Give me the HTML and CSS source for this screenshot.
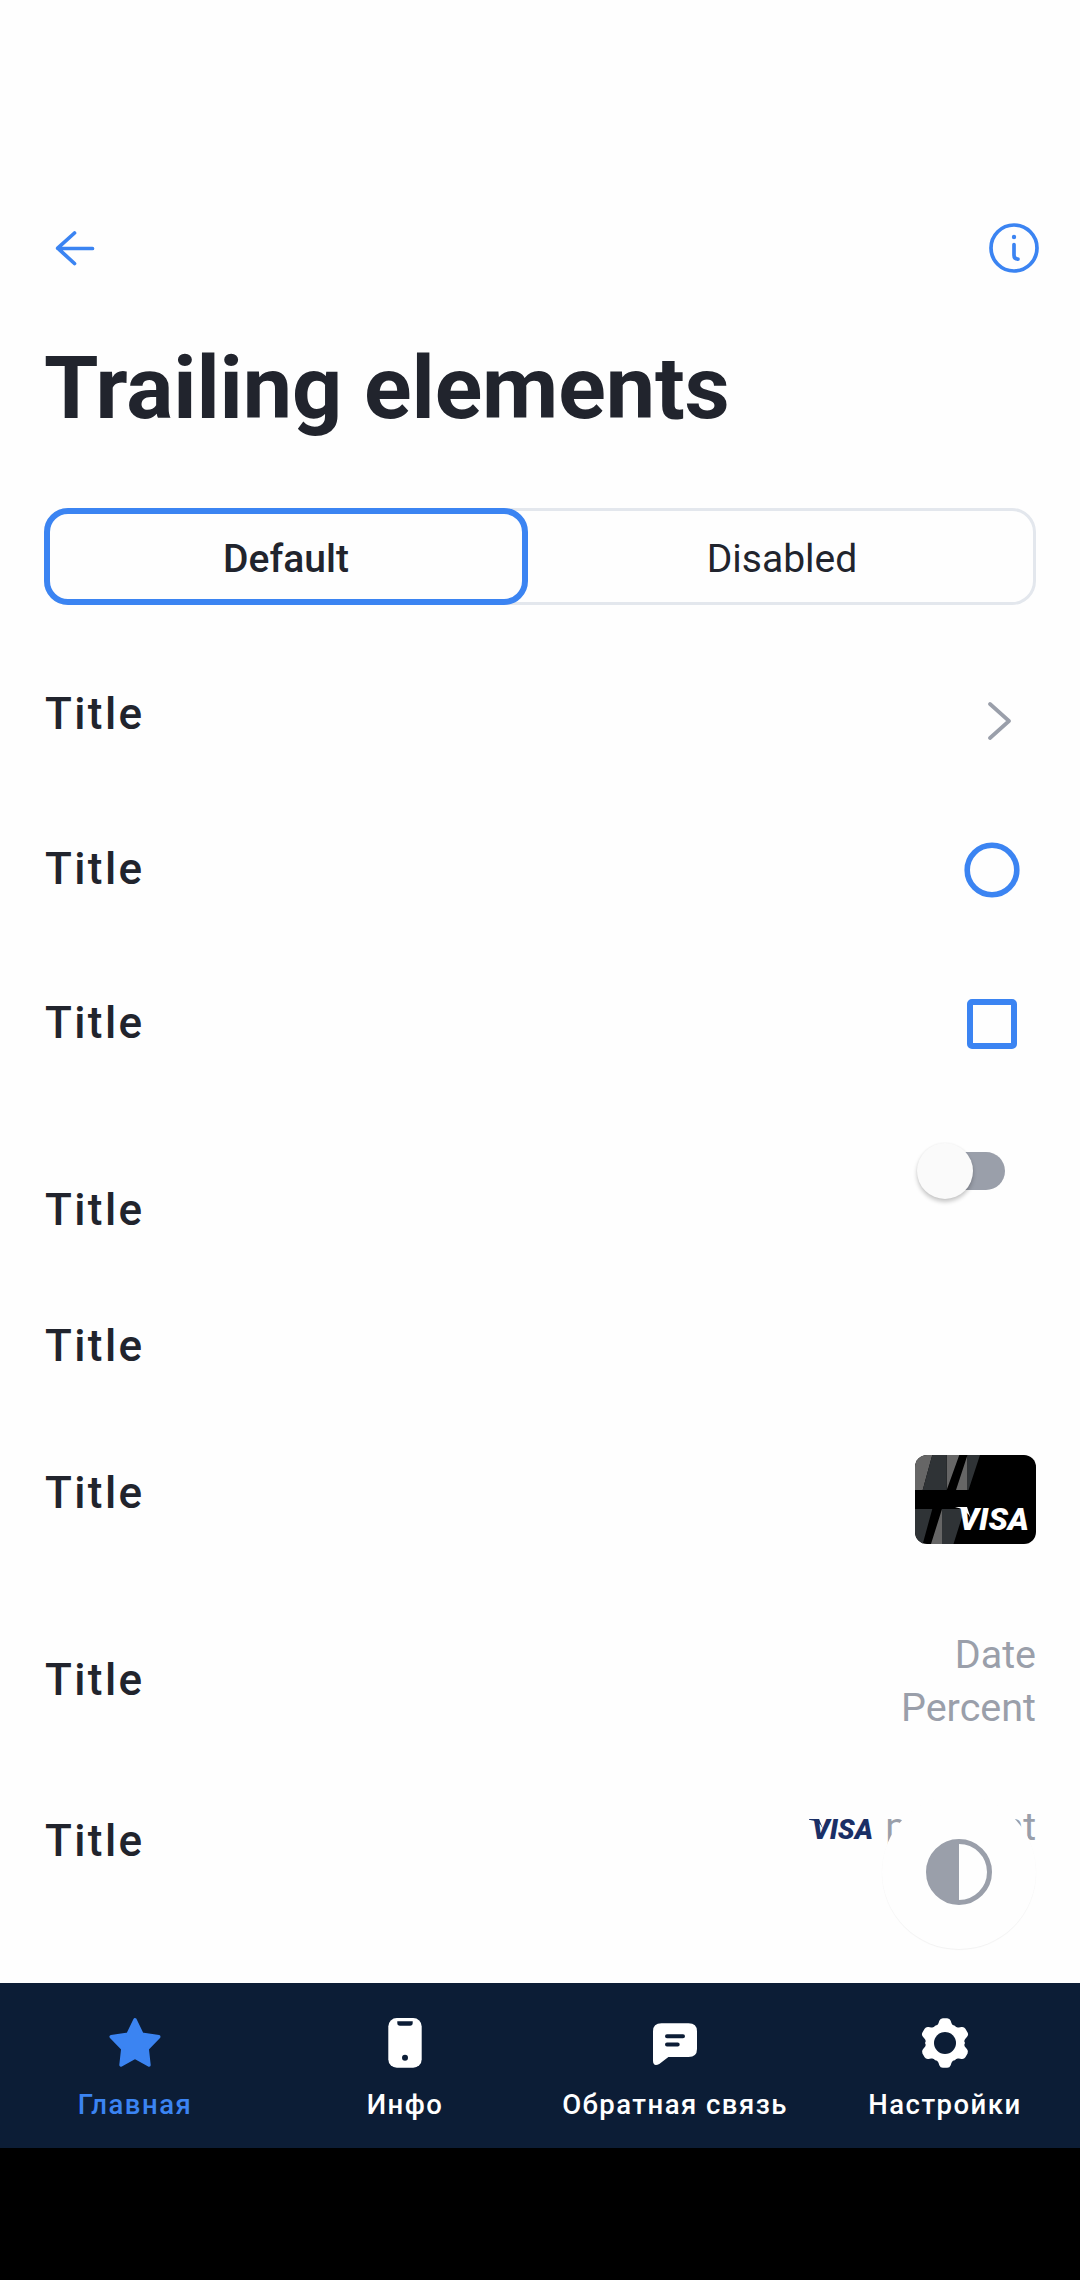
FILE: index.html
```html
<!DOCTYPE html>
<html lang="ru">
<head>
<meta charset="utf-8">
<title>Trailing elements</title>
<link rel="stylesheet" href="styles.css">
</head>
<body>
<div class="screen">
  <header class="toolbar">
    <svg class="icon" width="66" height="66" viewBox="0 0 66 66"><path d="M33.500 18 16.700 33.200 33.500 48.500M17 33.500h34.500" class="line-blue"/></svg>
    <svg class="icon" width="66" height="66" viewBox="0 0 66 66"><circle cx="33" cy="33" r="23" class="line-blue"/><circle cx="33" cy="22" r="2.2" class="fill-blue"/><path d="M33 29.500v10.800q0 3.800 4 3.800" class="line-blue"/></svg>
  </header>
  <h1 class="heading">Trailing elements</h1>
  <div class="segments">
    <div class="segment segment-active">Default</div>
    <div class="segment">Disabled</div>
  </div>
  <main class="list">
    <div class="row row-chevron"><span class="title">Title</span>
      <svg class="chevron" width="24" height="40" viewBox="0 0 24 40"><path d="M3 3 22 20 3 37"/></svg></div>
    <div class="row row-radio"><span class="title">Title</span>
      <svg class="radio" width="56" height="56" viewBox="0 0 56 56"><circle cx="28" cy="28" r="24.800"/></svg></div>
    <div class="row row-check"><span class="title">Title</span><span class="checkbox"></span></div>
    <div class="row row-switch"><span class="title">Title</span><span class="switch"><span class="thumb"></span></span></div>
    <div class="row row-empty"><span class="title">Title</span></div>
    <div class="row row-card"><span class="title">Title</span>
      <svg class="card" width="121" height="89" viewBox="0 0 121 89">
        <rect width="121" height="89" fill="#000"/>
        <path d="M0 0h17.300L7.700 35H0zM31.700 0h12.600L31.700 35zM52.500 0v35H41zM27 54v35H16z" fill="#666"/>
        <path d="M17.300 0h14.400v35h-24zM52.500 0H65L53.500 35h-1zM0 54h17.300L7.700 89H0zM27 54h22.500l-11 35H27z" fill="#2f3336"/>
        <path d="M40 52h12l4 12q-4-10-16-12z" fill="#fff"/>
        <text x="43.500" y="75" textLength="70.500" lengthAdjust="spacingAndGlyphs" class="visa visa-light">VISA</text>
      </svg></div>
    <div class="row row-values"><span class="title">Title</span>
      <div class="values"><span>Date</span><span>Percent</span></div></div>
    <div class="row row-payment"><span class="title">Title</span>
      <div class="payment">
        <svg class="visa-logo" width="64" height="24" viewBox="0 0 64 24"><path d="M0 2h10l4 10Q11 4 0 2.800z" fill="#1a2f66"/><text x="3" y="22" textLength="61" lengthAdjust="spacingAndGlyphs" class="visa visa-dark">VISA</text></svg>
        <span>payment</span>
      </div></div>
    <button class="fab" aria-label="Theme"><svg width="66" height="66" viewBox="0 0 66 66"><circle cx="33" cy="33" r="30.500" fill="none" stroke="#9a9faa" stroke-width="5"/><path d="M33 1a32 32 0 0 0 0 64z" fill="#9a9faa"/></svg></button>
  </main>
  <nav class="tabs">
    <div class="tab tab-active">
      <svg width="66" height="66" viewBox="0 0 66 66"><path d="M33 9.800 40 24.200 56.800 26.800 45.200 38.700 47 55 33 47.300 19 55 20.800 38.700 9.200 26.800 26 24.200z" fill="currentColor" stroke="currentColor" stroke-width="3.400" stroke-linejoin="round"/></svg>
      <span>Главная</span></div>
    <div class="tab">
      <svg width="66" height="66" viewBox="0 0 66 66"><rect x="16.300" y="8" width="33.400" height="49.800" rx="8.500" fill="currentColor"/><path d="M25.300 11.300h15.400v1.700q0 2.700-2.700 2.700H28q-2.700 0-2.700-2.700z" class="cut"/><circle cx="33" cy="47.800" r="3" class="cut"/></svg>
      <span>Инфо</span></div>
    <div class="tab">
      <svg width="66" height="66" viewBox="0 0 66 66"><path d="M19.500 13.300h27q8.500 0 8.500 8V39q0 8-8.500 8H26.400L17.300 54Q11 57 11 50.500V21.300q0-8 8.500-8z" fill="currentColor"/><path d="M25 26.300h16M25 34.500h10.700" class="cut-line"/></svg>
      <span>Обратная связь</span></div>
    <div class="tab">
      <svg width="66" height="66" viewBox="0 0 66 66">
        <defs><path id="tooth" d="M22.500 16.200q3.300-.4 4-3L27.300 10.800q1-2.600 3.500-2.600h4.400q2.500 0 3.500 2.600l.8 2.400q.7 2.600 4 3L33 33z"/></defs>
        <g fill="currentColor"><circle cx="33" cy="33" r="19.300"/><use href="#tooth"/><use href="#tooth" transform="rotate(60 33 33)"/><use href="#tooth" transform="rotate(120 33 33)"/><use href="#tooth" transform="rotate(180 33 33)"/><use href="#tooth" transform="rotate(240 33 33)"/><use href="#tooth" transform="rotate(300 33 33)"/></g>
        <circle cx="33" cy="33" r="11" class="cut"/></svg>
      <span>Настройки</span></div>
  </nav>
</div>
</body>
</html>
```
FILE: styles.css
```css
* { box-sizing: border-box; }
body { margin: 0; background: #000; }
.screen {
  display: flex;
  flex-direction: column;
  width: 1080px;
  height: 2280px;
  padding-bottom: 132px;
  background: linear-gradient(#fefefe, #fefefe) content-box, #000;
  color: #21242d;
  font-family: Roboto, sans-serif;
  overflow: hidden;
}
.toolbar {
  display: flex;
  flex: none;
  justify-content: space-between;
  height: 281px;
  padding: 215px 33px 0 41px;
}
.line-blue { fill: none; stroke: #3b84f2; stroke-width: 3.7; stroke-linecap: round; stroke-linejoin: round; }
.fill-blue { fill: #3b84f2; }
.heading {
  flex: none;
  height: 104px;
  margin: 55px 44px 68px;
  font-size: 88px;
  font-weight: 700;
  line-height: 104px;
  letter-spacing: -0.09px;
}
.segments {
  display: flex;
  flex: none;
  height: 97px;
  margin: 0 44px;
  border-radius: 24px;
  box-shadow: inset 0 0 0 3px #e3e7ed;
}
.segment {
  flex: 1;
  font-size: 39px;
  line-height: 102px;
  text-align: center;
}
.segment-active {
  flex: 0 0 484px;
  border: 6px solid #3b84f2;
  border-radius: 24px;
  font-weight: 500;
  line-height: 90px;
}
.list {
  position: relative;
  flex: none;
  height: 1378px;
  padding: 41px 44px 0 44px;
}
.row {
  display: flex;
  justify-content: space-between;
  align-items: flex-start;
}
.title {
  padding: 42px 0 0 1px;
  font-size: 44px;
  font-weight: 500;
  line-height: 52px;
  letter-spacing: 2.4px;
}
.row-chevron { height: 155px; }
.row-radio { height: 154px; }
.row-check { height: 187px; }
.row-switch { height: 136px; }
.row-empty { height: 147px; }
.row-card { height: 187px; }
.row-values { height: 161px; }
.chevron { margin: 55px 25px 0 0; fill: none; stroke: #9a9faa; stroke-width: 3.7; stroke-linecap: round; stroke-linejoin: round; }
.radio { margin: 41px 16px 0 0; fill: none; stroke: #3b84f2; stroke-width: 5.6; }
.checkbox { width: 50px; height: 50px; margin: 44px 19px 0 0; border: 6px solid #3b84f2; border-radius: 5px; }
.switch { display: flex; align-items: center; width: 80px; height: 38px; margin: 10px 31px 0 0; border-radius: 19px; background: #9a9faa; }
.thumb { flex: none; width: 56px; height: 56px; margin-left: -8px; border-radius: 50%; background: #fafafa; box-shadow: 0 3px 4px rgba(0,0,0,.22), 0 0 2px rgba(0,0,0,.05); }
.card { margin-top: 30px; border-radius: 12px; }
.visa { font-family: Roboto, sans-serif; font-style: italic; font-weight: 900; }
.visa-light { fill: #fff; font-size: 32px; }
.visa-dark { fill: #1a2f66; font-size: 28px; }
.values {
  display: flex;
  flex-direction: column;
  align-items: flex-end;
  margin-top: 16px;
  color: #9a9faa;
  font-size: 39.5px;
  line-height: 53px;
}
.payment {
  display: flex;
  gap: 12px;
  margin-top: 27px;
  color: #9a9faa;
  font-size: 39.5px;
  line-height: 53px;
  letter-spacing: -0.25px;
}
.visa-logo { margin-top: 17px; letter-spacing: 0; overflow: visible; }
.fab {
  position: absolute;
  right: 44px;
  bottom: 34px;
  display: flex;
  align-items: center;
  justify-content: center;
  width: 154px;
  height: 154px;
  padding: 0;
  border: 0;
  border-radius: 50%;
  background: #fefefe;
  box-shadow: 0 1px 1px rgba(0,0,0,.05);
}
.tabs {
  display: flex;
  flex: 1;
  background: #0c1d36;
}
.tab {
  display: flex;
  flex: 1;
  flex-direction: column;
  align-items: center;
  padding-top: 27px;
  color: #fff;
  font-size: 27.5px;
  font-weight: 500;
  line-height: 34px;
  letter-spacing: 1.48px;
  white-space: nowrap;
}
.tab span { margin-top: 12px; }
.tab-active { color: #3b84f2; }
.cut { fill: #0c1d36; }
.cut-line { stroke: #0c1d36; stroke-width: 4; stroke-linecap: round; }
```
